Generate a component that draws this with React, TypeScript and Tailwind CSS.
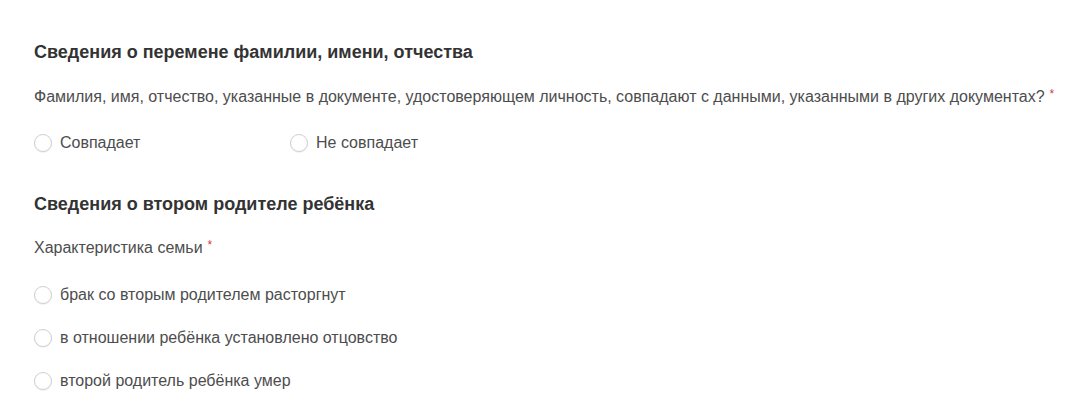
import { useState } from "react";

type RadioProps = {
  label: string;
  checked: boolean;
  onChange: () => void;
  className?: string;
};

function Radio({ label, checked, onChange, className }: RadioProps) {
  return (
    <label className={"flex items-center gap-[8px] h-[20px] cursor-pointer " + (className ?? "")}>
      <span className="w-[18px] h-[18px] rounded-full border border-[#cfcfcf] bg-white shadow-[0_1px_1px_rgba(0,0,0,0.06)] flex items-center justify-center shrink-0">
        {checked && <span className="w-[8px] h-[8px] rounded-full bg-[#0d4cd3]" />}
      </span>
      <input type="radio" className="hidden" checked={checked} onChange={onChange} />
      <span className="text-[16px] leading-[20px] text-[#4d4d4d]">{label}</span>
    </label>
  );
}

function Required() {
  return <span className="text-[#d4384c] text-[12px] align-top ml-[5px] relative top-[-3px]">*</span>;
}

export default function App() {
  const [nameMatch, setNameMatch] = useState<string | null>(null);
  const [family, setFamily] = useState<string | null>(null);

  const familyOptions = [
    "брак со вторым родителем расторгнут",
    "в отношении ребёнка установлено отцовство",
    "второй родитель ребёнка умер",
  ];

  return (
    <div className="min-h-screen bg-white font-['Liberation_Sans',Arial,sans-serif] text-[#333] pl-[34px] pr-[8px] pt-[42px]">
      <section>
        <h2 className="text-[18px] font-bold text-[#333] leading-[20px]">
          Сведения о перемене фамилии, имени, отчества
        </h2>
        <p className="mt-[25px] text-[16px] text-[#4d4d4d] leading-[20px] whitespace-nowrap">
          Фамилия, имя, отчество, указанные в документе, удостоверяющем личность, совпадают с данными, указанными в других документах?
          <Required />
        </p>
        <div className="mt-[26px] flex">
          <Radio
            className="w-[256px]"
            label="Совпадает"
            checked={nameMatch === "yes"}
            onChange={() => setNameMatch("yes")}
          />
          <Radio
            label="Не совпадает"
            checked={nameMatch === "no"}
            onChange={() => setNameMatch("no")}
          />
        </div>
      </section>

      <section className="mt-[41px]">
        <h2 className="text-[18px] font-bold text-[#333] leading-[20px]">
          Сведения о втором родителе ребёнка
        </h2>
        <p className="mt-[24px] text-[16px] text-[#4d4d4d] leading-[20px]">
          Характеристика семьи
          <Required />
        </p>
        <div className="mt-[27px] flex flex-col gap-[23px]">
          {familyOptions.map((opt) => (
            <Radio key={opt} label={opt} checked={family === opt} onChange={() => setFamily(opt)} />
          ))}
        </div>
      </section>
    </div>
  );
}
